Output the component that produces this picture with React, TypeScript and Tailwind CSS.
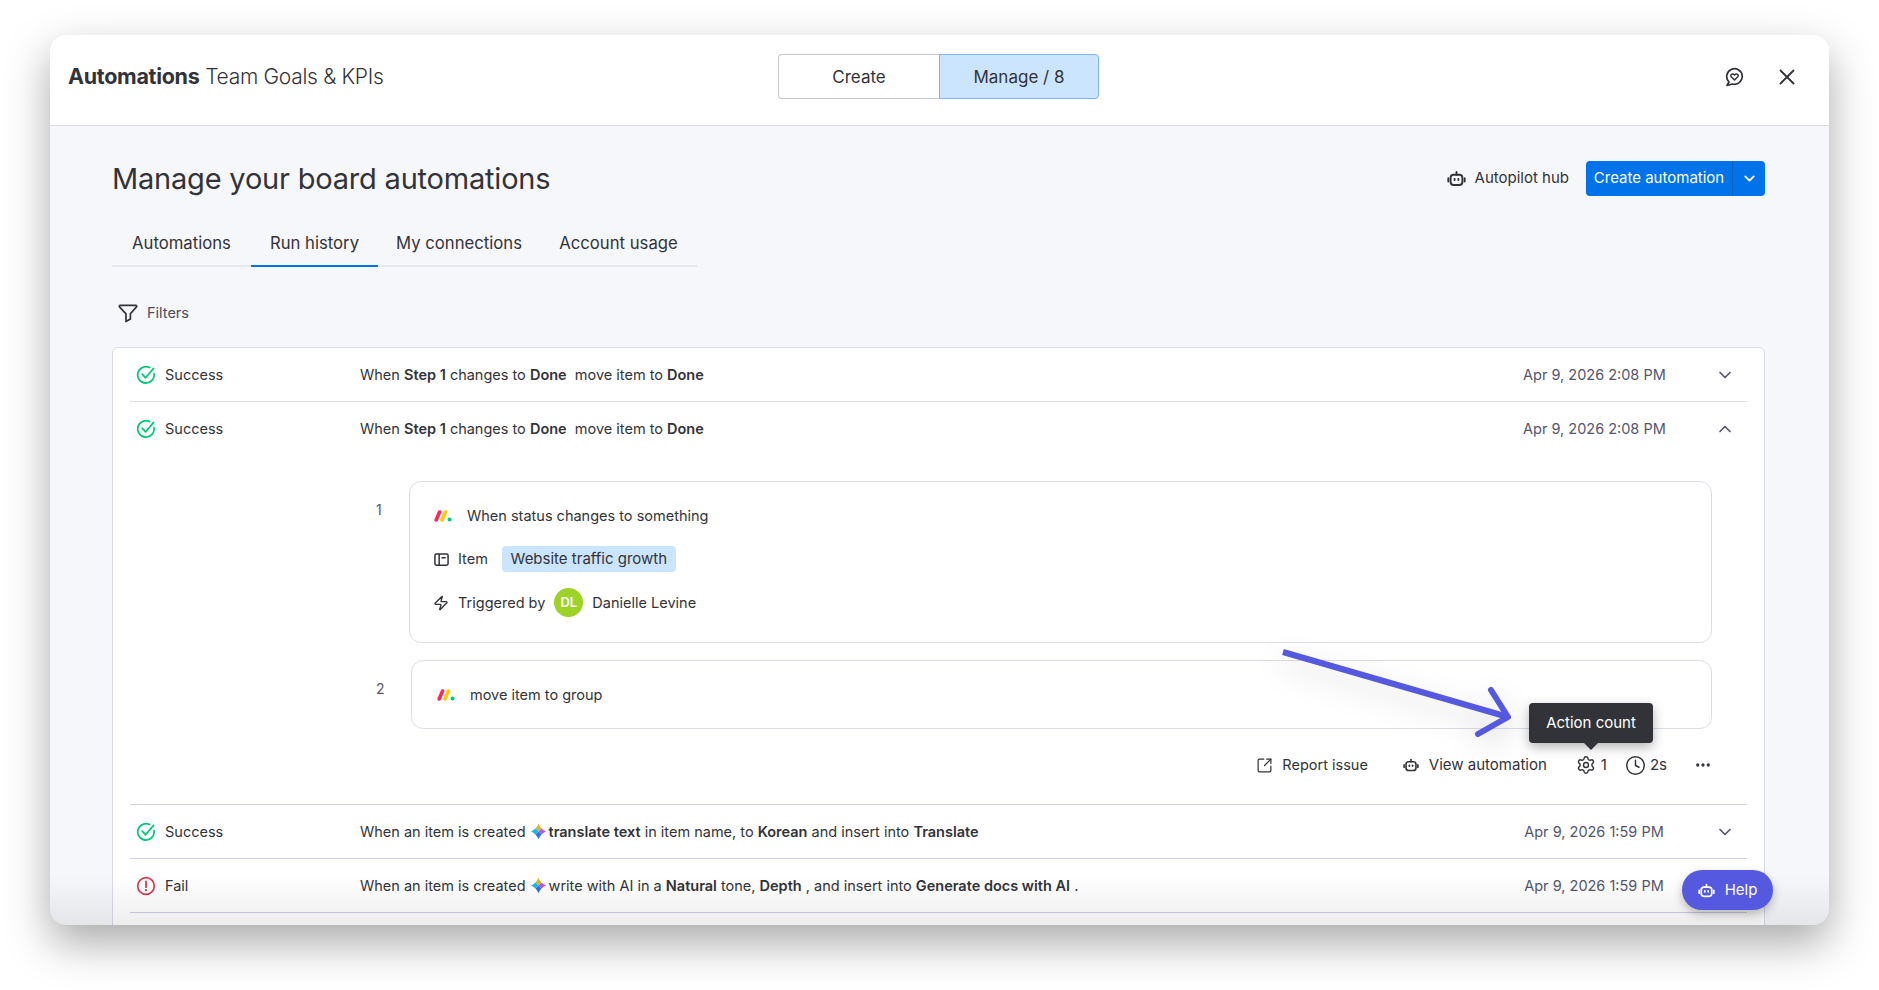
import type { ReactNode } from "react";
import { ChevronDown, ChevronUp, X, SquareArrowOutUpRight, Clock, Settings, Ellipsis, Zap } from "lucide-react";

const body = "font-['Inter','Liberation_Sans',sans-serif]";

function RobotIcon({ className = "", color = "#323338" }: { className?: string; color?: string }) {
  return (
    <svg viewBox="0 0 20 20" fill="none" className={className}>
      <rect x="3.800" y="6" width="12.400" height="10.800" rx="3.200" stroke={color} strokeWidth="2" />
      <path d="M10 6V3.200" stroke={color} strokeWidth="2" strokeLinecap="round" />
      <path d="M1.400 9.800v3.400M18.600 9.800v3.400" stroke={color} strokeWidth="2" strokeLinecap="round" />
      <rect x="7" y="9.400" width="2" height="3.200" rx=".9" fill={color} />
      <rect x="11" y="9.400" width="2" height="3.200" rx=".9" fill={color} />
    </svg>
  );
}

function CheckCircle() {
  return (
    <svg viewBox="0 0 20 20" fill="none" className="w-[20px] h-[20px] shrink-0">
      <path d="M18 8.600A8.200 8.200 0 1 1 13.600 2.600" stroke="#00c875" strokeWidth="1.700" strokeLinecap="round" />
      <path d="M6.200 9.200l3.400 3.600 8-9.400" stroke="#00c875" strokeWidth="1.700" strokeLinecap="round" strokeLinejoin="round" />
    </svg>
  );
}

function FailCircle() {
  return (
    <svg viewBox="0 0 20 20" fill="none" className="w-[20px] h-[20px] shrink-0">
      <circle cx="10" cy="10" r="8.300" stroke="#d83a52" strokeWidth="1.700" />
      <path d="M10 5.400v5.800" stroke="#d83a52" strokeWidth="1.800" strokeLinecap="round" />
      <circle cx="10" cy="14.200" r="1.100" fill="#d83a52" />
    </svg>
  );
}

function MondayLogo() {
  return (
    <svg viewBox="0 0 18 12" className="w-[18px] h-[12px] shrink-0">
      <path d="M2.200 10 5.600 2" stroke="#fb275d" strokeWidth="3.600" strokeLinecap="round" />
      <path d="M8 10 11.400 2" stroke="#ffcb00" strokeWidth="3.600" strokeLinecap="round" />
      <circle cx="15.600" cy="9.600" r="2" fill="#00ca72" />
    </svg>
  );
}

function Sparkle() {
  return (
    <svg viewBox="0 0 14 14" className="w-[15px] h-[15px] shrink-0 ml-[5px] mr-[3px]">
      <defs>
        <clipPath id="spark-star">
          <path d="M7 0C8.200 3 11 5.800 14 7 11 8.200 8.200 11 7 14 5.800 11 3 8.200 0 7 3 5.800 5.800 3 7 0Z" />
        </clipPath>
      </defs>
      <g clipPath="url(#spark-star)">
        <path d="M7 7 0 0H14Z" fill="#a4cf3c" />
        <path d="M7 0 9 5H5Z" fill="#f6a623" />
        <path d="M7 7 14 0V14Z" fill="#d14fd6" />
        <path d="M7 7 14 14H0Z" fill="#2f6fe8" />
        <path d="M7 7 0 14V0Z" fill="#19b5e8" />
      </g>
    </svg>
  );
}

function Row({ status, desc, date, open }: { status: "ok" | "fail"; desc: ReactNode; date: string; open?: boolean }) {
  return (
    <div className="flex items-center h-[53px] pl-[6px] pr-[12px]">
      <div className="w-[224px] flex items-center gap-[9px]">
        {status === "ok" ? <CheckCircle /> : <FailCircle />}
        <span className="text-[14.500px] text-[#323338]">{status === "ok" ? "Success" : "Fail"}</span>
      </div>
      <div className="flex-1 flex items-center text-[14.500px] text-[#323338] whitespace-pre">{desc}</div>
      <span className="text-[14.500px] text-[#55566c] w-[142px] text-center whitespace-nowrap">{date}</span>
      {open ? (
        <ChevronUp className="w-[20px] h-[20px] text-[#55566c] ml-[50px]" />
      ) : (
        <ChevronDown className="w-[20px] h-[20px] text-[#55566c] ml-[50px]" />
      )}
    </div>
  );
}

const stepDesc = (
  <>
    When <b className="font-semibold">Step 1</b> changes to <b className="font-semibold">Done</b>  move item to <b className="font-semibold">Done</b>
  </>
);

export default function App() {
  return (
    <div className={`w-[1879px] h-[990px] bg-white pt-[35px] pl-[50px] overflow-hidden text-[#323338] ${body}`}>
      <div className="relative w-[1779px] h-[890px] rounded-2xl overflow-hidden bg-[#f6f7fb] shadow-[0_18px_44px_rgba(0,0,0,0.34)]">
        {/* header */}
        <div className="relative flex items-center justify-between h-[91px] bg-white border-b border-[#d9dae2] pl-[18px] pr-[29px] pb-[7px]">
          <div className="text-[21.500px] tracking-[-0.3px]">
            <span className="font-bold">Automations</span> <span className="font-light text-[21px]">Team Goals &amp; KPIs</span>
          </div>
          <div className="absolute left-[728px] top-[19px] flex h-[45px] text-[17px]">
            <div className="w-[161px] pt-[2px] flex items-center justify-center bg-white border border-[#c5c7d4] border-r-0 rounded-l">Create</div>
            <div className="w-[160px] pt-[2px] flex items-center justify-center bg-[#cce5ff] border border-[#7db4f5] rounded-r">Manage / 8</div>
          </div>
          <div className="flex items-center gap-[30px]">
            <svg viewBox="0 0 20 20" fill="none" className="w-[20px] h-[20px]">
              <path d="M5 15A7.800 7.800 0 1 1 8.500 17L3 18.300Z" stroke="#323338" strokeWidth="1.700" strokeLinejoin="round" />
              <path d="M10.500 13 7.200 9.800C5.800 8 8.300 5.800 10.500 7.900 12.700 5.800 15.200 8 13.800 9.800Z" stroke="#323338" strokeWidth="1.500" strokeLinejoin="round" />
            </svg>
            <X className="w-[26px] h-[26px]" strokeWidth={1.700} />
          </div>
        </div>

        {/* main */}
        <div className="pl-[62px] pr-[64px]">
          <div className="flex items-center justify-between h-[35px] mt-[35px]">
            <h1 className="text-[29px] font-normal tracking-[-0.2px]">Manage your board automations</h1>
            <div className="flex items-center">
              <RobotIcon className="w-[19px] h-[19px]" />
              <span className="text-[15px] ml-[9px] mr-[17px]">Autopilot hub</span>
              <div className="flex h-[35px] rounded bg-[#0073ea] text-white text-[15px]">
                <div className="w-[147px] flex items-center justify-center border-r border-[#0060b9]">Create automation</div>
                <div className="w-[32px] flex items-center justify-center">
                  <ChevronDown className="w-[17px] h-[17px]" strokeWidth={2.500} />
                </div>
              </div>
            </div>
          </div>

          {/* tabs */}
          <div className="flex w-[585px] h-[47px] mt-[24px] border-b-2 border-[#e7e8ee] text-[16.700px]">
            <div className="w-[139px] pt-[3px] flex items-center justify-center">Automations</div>
            <div className="w-[127px] pt-[3px] flex items-center justify-center border-b-2 border-[#0073ea] -mb-[2px]">Run history</div>
            <div className="w-[162px] pt-[3px] flex items-center justify-center">My connections</div>
            <div className="w-[157px] pt-[3px] flex items-center justify-center">Account usage</div>
          </div>

          {/* filters */}
          <div className="flex items-center h-[24px] mt-[34px] pl-[6px] gap-[9px]">
            <svg viewBox="0 0 20 20" fill="none" className="w-[20px] h-[20px]">
              <path d="M2.200 2.400h15.600c.8 0 1.200.9.7 1.500L12.400 10.800v5.200L8 18.600v-7.800L1.500 3.900c-.5-.6-.1-1.500.7-1.500Z" stroke="#323338" strokeWidth="1.700" strokeLinejoin="round" />
            </svg>
            <span className="text-[14.500px] text-[#4b4c5c]">Filters</span>
          </div>

          {/* runs */}
          <div className="mt-[22px] bg-white border border-[#d9dae8] rounded-md px-[17px]">
            <Row status="ok" desc={stepDesc} date="Apr 9, 2026 2:08 PM" />
            <div className="border-t border-[#dcdde8]">
              <Row status="ok" desc={stepDesc} date="Apr 9, 2026 2:08 PM" open />
              <div className="pl-[246px] pr-[35px] pt-[26px]">
                <div className="flex">
                  <span className="w-[33px] pt-[18px] text-[14px] text-[#55566c]">1</span>
                  <div className="flex-1 h-[162px] border border-[#dcdde8] rounded-xl pl-[24px] pt-[23px] flex flex-col text-[14.500px]">
                    <div className="flex items-center gap-[15px] h-[22px]">
                      <MondayLogo />
                      <span>When status changes to something</span>
                    </div>
                    <div className="flex items-center h-[26px] mt-[19px]">
                      <svg viewBox="0 0 16 16" fill="none" className="w-[15px] h-[15px]">
                        <rect x="1" y="2" width="14" height="12" rx="1.500" stroke="#323338" strokeWidth="1.600" />
                        <path d="M5.500 2v12M8 6h4.500" stroke="#323338" strokeWidth="1.600" />
                      </svg>
                      <span className="ml-[9px]">Item</span>
                      <span className="ml-[14px] h-[26px] w-[174px] flex items-center justify-center rounded bg-[#cce5ff] text-[15px]">Website traffic growth</span>
                    </div>
                    <div className="flex items-center h-[29px] mt-[16px]">
                      <Zap className="w-[16px] h-[16px] -ml-[1px]" strokeWidth={2} />
                      <span className="ml-[9px]">Triggered by</span>
                      <span className="ml-[9px] w-[29px] h-[29px] rounded-full bg-[#9cd326] text-white text-[13px] font-semibold flex items-center justify-center">DL</span>
                      <span className="ml-[9px]">Danielle Levine</span>
                    </div>
                  </div>
                </div>
                <div className="flex mt-[17px]">
                  <span className="w-[35px] pt-[18px] text-[14px] text-[#55566c]">2</span>
                  <div className="flex-1 h-[69px] border border-[#dcdde8] rounded-xl pl-[25px] flex items-center gap-[15px] text-[14.500px]">
                    <MondayLogo />
                    <span>move item to group</span>
                  </div>
                </div>
                <div className="flex items-center justify-end h-[72px] mb-[3px] text-[#323338]">
                  <SquareArrowOutUpRight className="w-[17px] h-[17px]" strokeWidth={1.700} />
                  <span className="ml-[9px] text-[14.500px]">Report issue</span>
                  <RobotIcon className="w-[16px] h-[16px] ml-[35px]" />
                  <span className="ml-[10px] text-[15px]">View automation</span>
                  <Settings className="w-[20px] h-[20px] ml-[29px]" strokeWidth={1.700} />
                  <span className="ml-[5px] text-[15px]">1</span>
                  <Clock className="w-[21px] h-[21px] ml-[18px]" strokeWidth={1.700} />
                  <span className="ml-[4px] text-[15px]">2s</span>
                  <Ellipsis className="w-[18px] h-[18px] ml-[27px]" strokeWidth={2.400} />
                </div>
              </div>
            </div>
            <div className="border-t border-[#cdd0e6]">
              <Row
                status="ok"
                date="Apr 9, 2026 1:59 PM"
                desc={
                  <>
                    When an item is created<Sparkle /><b className="font-semibold">translate text</b> in item name, to <b className="font-semibold">Korean</b> and insert into <b className="font-semibold">Translate</b>
                  </>
                }
              />
            </div>
            <div className="border-t border-[#cdd0e6]">
              <Row
                status="fail"
                date="Apr 9, 2026 1:59 PM"
                desc={
                  <>
                    When an item is created<Sparkle />write with AI in a <b className="font-semibold">Natural</b> tone, <b className="font-semibold">Depth</b> , and insert into <b className="font-semibold">Generate docs with AI</b> .
                  </>
                }
              />
            </div>
            <div className="border-t border-[#cdd0e6] h-[60px]" />
          </div>
        </div>

        {/* bottom fade */}
        <div className="absolute left-0 right-0 bottom-0 h-[50px] bg-gradient-to-b from-transparent to-black/[0.07] pointer-events-none" />

        {/* tooltip */}
        <div className="absolute left-[1479px] top-[668px] w-[124px] h-[40px] rounded bg-[#323338] text-white text-[15px] flex items-center justify-center shadow-[0_4px_12px_rgba(0,0,0,0.3)]">
          Action count
          <span className="absolute left-[55px] bottom-[-7px] border-x-[7px] border-x-transparent border-t-[7px] border-t-[#323338]" />
        </div>

        {/* annotation arrow */}
        <svg viewBox="0 0 240 90" fill="none" className="absolute left-[1230px] top-[612px] w-[240px] h-[90px] drop-shadow-[0_10px_14px_rgba(0,0,0,0.18)]">
          <path d="M3 5 228 70" stroke="#5559df" strokeWidth="6" />
          <path d="M211 43 228 70 198 87" stroke="#5559df" strokeWidth="6" strokeLinecap="round" strokeLinejoin="round" />
        </svg>

        {/* help */}
        <div className="absolute left-[1632px] top-[835px] w-[91px] h-[40px] rounded-full bg-[#5559df] text-white text-[15px] flex items-center justify-center gap-[10px] shadow-[0_4px_10px_rgba(0,0,0,0.25)]">
          <RobotIcon className="w-[17px] h-[17px]" color="#ffffff" />
          Help
        </div>
      </div>
    </div>
  );
}
